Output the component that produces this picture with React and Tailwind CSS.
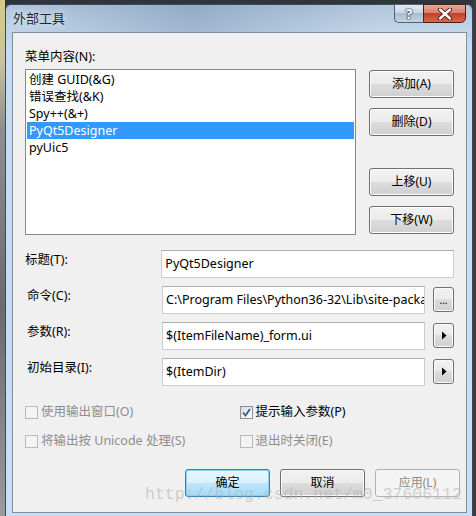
import React from 'react'
import clsx from 'clsx'

const ui = "font-['Noto_Sans','Noto_Sans_CJK_SC',sans-serif]"

function Btn({ children, className, focused, disabled }) {
    return (
        <div
            className={clsx(
                'flex h-[28px] w-[85px] items-center justify-center rounded-[3px] border text-[12px] leading-none',
                disabled
                    ? 'border-[#adb2b5] bg-[#f4f4f4] text-[#8a8a8a]'
                    : focused
                        ? 'border-[#3c7fb1] bg-[linear-gradient(180deg,#eaf6fd_0%,#d9f0fc_50%,#bee6fd_50%,#a7d9f5_100%)] text-black shadow-[inset_0_0_0_1px_#8ad2f2]'
                        : 'border-[#707070] bg-[linear-gradient(180deg,#f2f2f2_0%,#ebebeb_50%,#dddddd_50%,#cfcfcf_100%)] text-black shadow-[inset_0_0_0_1px_#fbfbfb]',
                className
            )}
        >
            {children}
        </div>
    )
}

function Check({ checked, disabled, label }) {
    return (
        <div className="flex h-[16px] w-[216px] items-center gap-[3px]">
            <div className={clsx('flex h-[13px] w-[13px] items-center justify-center border', disabled ? 'border-[#b9b9b9] bg-[#f4f4f4]' : 'border-[#8e8f8f] bg-[linear-gradient(135deg,#dcdcdc,#ffffff)]')}>
                {checked && (
                    <svg width="9" height="9" viewBox="0 0 9 9">
                        <path d="M1 4.5 L3.5 7.5 L8 1" fill="none" stroke="#3b5795" strokeWidth="1.8" />
                    </svg>
                )}
            </div>
            <span className={clsx('text-[12.5px] leading-[16px]', disabled ? 'text-[#8d8d8d]' : 'text-black')}>{label}</span>
        </div>
    )
}

function Field({ label, value, wide, btn }) {
    return (
        <div className="flex h-[28px] items-start">
            <div className={clsx('w-[137px] pt-[2px] text-[12.5px] leading-[16px]', !wide && 'pl-[2px]')}>{label}</div>
            <div className={clsx('flex h-[28px] items-center overflow-hidden whitespace-nowrap border border-[#c9cbd1] border-t-[#abadb3] bg-white pl-[3px] text-[12.5px]', wide ? 'w-[294px]' : 'w-[263px]')}>
                {value}
            </div>
            {btn && (
                <div className="ml-[8px] mt-[1px] flex h-[25px] w-[21px] items-center justify-center rounded-[3px] border border-[#707070] bg-[linear-gradient(180deg,#f2f2f2_0%,#ebebeb_50%,#dddddd_50%,#cfcfcf_100%)] shadow-[inset_0_0_0_1px_#fbfbfb]">
                    {btn === 'dots' ? (
                        <span className="text-[10px] leading-none">...</span>
                    ) : (
                        <svg width="6" height="9" viewBox="0 0 6 9"><path d="M1 0.5 L5.5 4.5 L1 8.5 Z" fill="#000" /></svg>
                    )}
                </div>
            )}
        </div>
    )
}

export default function App() {
    const items = ['创建 GUID(&G)', '错误查找(&K)', 'Spy++(&+)', 'PyQt5Designer', 'pyUic5']

    return (
        <div className={clsx('relative flex h-[516px] w-[476px] overflow-hidden bg-[#2f353c]', ui)}>
            {/* background window peeking out */}
            <div className="h-full w-[5px] bg-[linear-gradient(180deg,#d9c98f_0%,#c9c2a0_12%,#8e8e8e_25%,#6b6b6b_60%,#9a9a9a_100%)]" />

            <div className="pt-[4px]">
                <div className="w-[468px] rounded-t-[6px] border border-b-0 border-[#3b4a5a] bg-[linear-gradient(180deg,#a9c0d8_0%,#c5dbf0_8%,#c9def2_100%)] pb-[5px]">
                    {/* title bar */}
                    <div className="flex h-[27px] items-start justify-between bg-[linear-gradient(90deg,rgba(255,255,255,0.1)_0%,rgba(80,110,140,0.25)_40%,rgba(255,255,255,0.1)_80%)]">
                        <div className="pl-[7px] pt-[5px] text-[13px] leading-[16px] text-[#1b2a3a] [text-shadow:0_0_6px_#ffffff]">外部工具</div>
                        <div className="mr-[6px] -mt-[1px] flex h-[19px]">
                            <div className="flex w-[29px] items-center justify-center rounded-bl-[5px] border border-r-0 border-[#4f6277] bg-[linear-gradient(180deg,#e2ebf4_0%,#c6d5e4_50%,#aabdd1_50%,#c2d3e4_100%)]">
                                <span className="text-[14px] font-bold leading-none text-white [text-shadow:0_0_1px_#203040,0_0_1px_#203040,0_0_2px_#203040]">?</span>
                            </div>
                            <div className="flex w-[43px] items-center justify-center rounded-br-[5px] border border-[#4a1f1a] bg-[linear-gradient(180deg,#e9a99b_0%,#d47b69_50%,#c2412b_50%,#d7674a_100%)]">
                                <svg width="16" height="12" viewBox="0 0 16 12">
                                    <path d="M3 1.5 L13 10.5 M13 1.5 L3 10.5" stroke="#3a1510" strokeWidth="4.2" strokeLinecap="round" />
                                    <path d="M3 1.5 L13 10.5 M13 1.5 L3 10.5" stroke="#ffffff" strokeWidth="2.4" strokeLinecap="round" />
                                </svg>
                            </div>
                        </div>
                    </div>

                    {/* client area */}
                    <div className="ml-[6px] mr-[5px] border border-[#7f8fa2] bg-[#f0f0f0] pl-[12px] pr-[12px] pt-[16px] pb-[15px] text-black">
                        <div className="text-[12.5px] leading-[16px]">菜单内容(N):</div>

                        <div className="mt-[4px] flex items-start gap-[13px]">
                            <div className="h-[166px] w-[331px] border border-[#828790] bg-white pt-[1px]">
                                {items.map((it, i) => (
                                    <div
                                        key={it}
                                        className={clsx(
                                            'mx-[1px] h-[17px] pl-[2px] text-[12.5px] leading-[17px]',
                                            i === 3 ? 'bg-[#3399ff] text-white' : 'text-black'
                                        )}
                                    >
                                        {it}
                                    </div>
                                ))}
                            </div>
                            <div className="mt-[1px] flex flex-col">
                                <Btn>添加(A)</Btn>
                                <Btn className="mt-[10px]">删除(D)</Btn>
                                <Btn className="mt-[32px]">上移(U)</Btn>
                                <Btn className="mt-[10px]">下移(W)</Btn>
                            </div>
                        </div>

                        <div className="mt-[15px] flex flex-col gap-[8px]">
                            <Field label="标题(T):" value="PyQt5Designer" wide />
                            <Field label="命令(C):" value="C:\Program Files\Python36-32\Lib\site-packa" btn="dots" />
                            <Field label="参数(R):" value="$(ItemFileName)_form.ui" btn="arrow" />
                            <Field label="初始目录(I):" value="$(ItemDir)" btn="arrow" />
                        </div>

                        <div className="mt-[18px] flex">
                            <Check disabled label="使用输出窗口(O)" />
                            <Check checked label="提示输入参数(P)" />
                        </div>
                        <div className="mt-[13px] flex">
                            <Check disabled label="将输出按 Unicode 处理(S)" />
                            <Check disabled label="退出时关闭(E)" />
                        </div>

                        <div className="-mr-[6px] mt-[20px] flex justify-end gap-[10px]">
                            <Btn focused>确定</Btn>
                            <Btn>取消</Btn>
                            <Btn disabled>应用(L)</Btn>
                        </div>
                    </div>
                </div>
            </div>

            <div className="h-full w-[3px] bg-[#3a3d42]" />

            {/* watermark */}
            <div className="pointer-events-none absolute left-[145px] top-[487px] font-['Liberation_Mono',monospace] text-[16.5px] leading-none text-[#b4b4b4]/60">
                http://blog.csdn.net/m0_37606112
            </div>
        </div>
    )
}
